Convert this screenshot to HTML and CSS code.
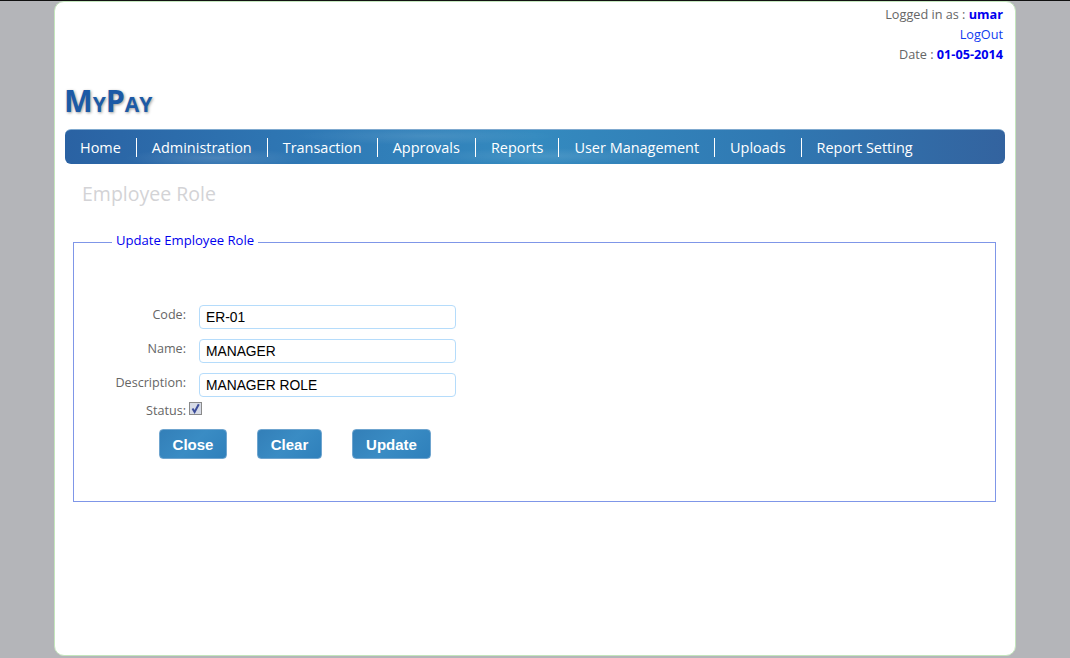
FILE: index.html
```html
<!DOCTYPE html>
<html lang="en">
<head>
<meta charset="utf-8">
<title>MyPay - Employee Role</title>
<link rel="stylesheet" href="styles.css">
</head>
<body>
<div class="page">
  <header class="top">
    <div class="user-line">Logged in as : <b>umar</b></div>
    <div class="logout-line"><a href="#">LogOut</a></div>
    <div class="date-line">Date : <b>01-05-2014</b></div>
  </header>
  <div class="logo">MyPay</div>
  <nav class="menu">
    <a href="#">Home</a>
    <a href="#">Administration</a>
    <a href="#">Transaction</a>
    <a href="#">Approvals</a>
    <a href="#">Reports</a>
    <a href="#">User Management</a>
    <a href="#">Uploads</a>
    <a href="#">Report Setting</a>
  </nav>
  <h1 class="title">Employee Role</h1>
  <fieldset class="panel">
    <legend>Update Employee Role</legend>
    <form class="form">
      <label class="lbl" for="code">Code:</label>
      <input class="field" id="code" type="text" value="ER-01">
      <label class="lbl" for="name">Name:</label>
      <input class="field" id="name" type="text" value="MANAGER">
      <label class="lbl" for="desc">Description:</label>
      <input class="field" id="desc" type="text" value="MANAGER ROLE">
      <label class="lbl status-lbl" for="status">Status:</label>
      <div class="status"><span class="check" id="status"><svg width="11" height="11" viewBox="0 0 11 11"><path d="M2.5 5.5 L4.6 9 L8.8 1.2" fill="none" stroke="#3d4d9a" stroke-width="2"/></svg></span></div>
    </form>
    <div class="buttons">
      <button class="btn btn-close" type="button">Close</button>
      <button class="btn btn-clear" type="button">Clear</button>
      <button class="btn btn-update" type="button">Update</button>
    </div>
  </fieldset>
</div>
</body>
</html>
```
FILE: styles.css
```css
* { box-sizing: border-box; }
html, body { height: 100%; }
body {
  margin: 0;
  background: #b4b5b9;
  border-top: 1px solid #111;
  overflow: hidden;
  font-family: "Open Sans", "Noto Sans", sans-serif;
}
.page {
  width: 962px;
  height: 655px;
  margin-left: 54px;
  padding: 0 10px;
  background: #fff;
  border: 1px solid #c4e6bd;
  border-radius: 10px;
}
.top {
  height: 76px;
  padding: 2px 2px 0 0;
  text-align: right;
  font-size: 12.7px;
  color: #666;
}
.user-line, .logout-line, .date-line { height: 20px; line-height: 20px; }
.top b { color: #0000ee; }
.logout-line a { color: #0f3cf0; text-decoration: none; }
.logo {
  height: 51px;
  padding-top: 5px;
  margin-left: -1px;
  font-size: 30.4px;
  line-height: 36px;
  font-weight: 700;
  font-variant: small-caps;
  color: #1c5aa6;
  text-shadow: 1px 1px 3px #999;
}
.menu {
  display: flex;
  align-items: center;
  height: 35px;
  width: 940px;
  border-radius: 6px;
  border-top: 1px solid #7fa9cf;
  background:
    radial-gradient(ellipse 90px 10px at 150px 28px, rgba(255,255,255,.14), transparent),
    radial-gradient(ellipse 130px 9px at 360px 6px, rgba(255,255,255,.10), transparent),
    radial-gradient(ellipse 120px 8px at 480px 26px, rgba(255,255,255,.10), transparent),
    linear-gradient(90deg, #2a62a3 0%, #2f7ab6 28%, #348abf 50%, #3079b3 75%, #33639f 100%);
}
.menu a {
  height: 19px;
  padding: 0 15px;
  border-right: 1px solid #fff;
  color: #fff;
  font-size: 14.46px;
  line-height: 19px;
  text-decoration: none;
}
.menu a:last-child { border-right: 0; }
.title {
  margin: 0;
  height: 78px;
  padding: 17px 0 0 17px;
  font-size: 19.5px;
  line-height: 26px;
  font-weight: 400;
  color: #d3d3d6;
}
.panel {
  width: 923px;
  height: 271px;
  margin: -11px 0 0 8px;
  padding: 0;
  border: 1px solid #7f96e8;
}
.panel legend {
  margin-left: 38px;
  padding: 0 4px 4px;
  font-size: 13.1px;
  line-height: 18px;
  color: #0000ee;
}
.form {
  display: grid;
  grid-template-columns: 112px 257px;
  column-gap: 13px;
  row-gap: 10px;
  margin: 52px 0 0 0;
  align-items: start;
}
.lbl {
  padding-top: 1px;
  text-align: right;
  font-size: 12.6px;
  line-height: 18px;
  color: #666;
}
.field {
  width: 257px;
  height: 24px;
  padding: 0 6px;
  border: 1px solid #b5dcfb;
  border-radius: 4px;
  font-family: "Liberation Sans", Arial, sans-serif;
  font-size: 13.8px;
  color: #000;
}
.status-lbl { margin-top: -6px; }
.status { margin: -5px 0 0 -10px; height: 14px; }
.check {
  display: block;
  width: 13px;
  height: 13px;
  border: 1px solid #8a8a8a;
  background: #d7dbe6;
}
.check svg { display: block; }
.buttons { display: flex; margin: 9px 0 0 85px; gap: 30px; }
.btn {
  height: 30px;
  padding: 0;
  border: 1px solid #6fa5cf;
  border-radius: 4px;
  background: linear-gradient(135deg, #337fb8 0%, #3a8cc4 50%, #2f80bb 100%);
  color: #fff;
  font-family: "Liberation Sans", Arial, sans-serif;
  font-size: 15px;
  font-weight: 700;
}
.btn-close { width: 68px; }
.btn-clear { width: 65px; }
.btn-update { width: 79px; }
```
